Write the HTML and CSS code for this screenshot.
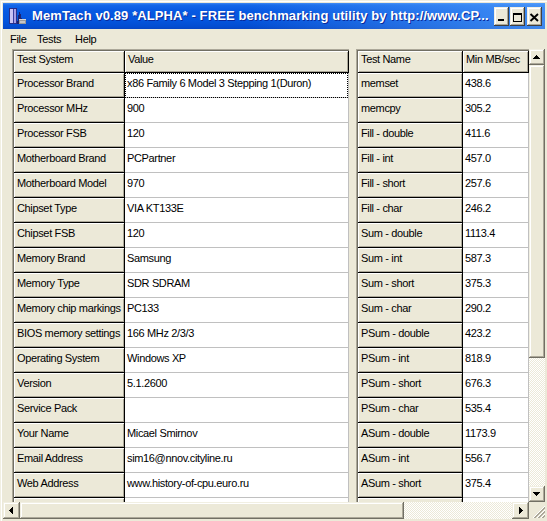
FILE: index.html
```html
<!DOCTYPE html>
<html>
<head>
<meta charset="utf-8">
<title>MemTach</title>
<link rel="stylesheet" href="styles.css">
</head>
<body>
<div class="window">
  <div class="titlebar">
    <svg class="app-icon" width="18" height="17" viewBox="0 0 18 17" shape-rendering="crispEdges">
      <rect x="1" y="0" width="8" height="16" fill="#2a2f8a"/>
      <rect x="2" y="1" width="3" height="14" fill="#c9c3f4"/>
      <rect x="5" y="1" width="1" height="14" fill="#3b3f9e"/>
      <rect x="6" y="1" width="2" height="14" fill="#a59ee6"/>
      <path d="M9 16 L11 4 L12 4 L15 16 Z" fill="#1d2270"/>
      <rect x="11" y="11" width="7" height="5" fill="#9a9a9a"/>
      <rect x="11" y="11" width="7" height="1" fill="#d8d8d8"/>
      <rect x="12" y="13" width="5" height="2" fill="#c6c6c6"/>
    </svg>
    <span class="title">MemTach v0.89 *ALPHA* - FREE benchmarking utility by http://www.CP...</span>
    <div class="caption-buttons">
      <span class="cbtn cbtn-min"><svg width="15" height="19" viewBox="0 0 15 19" shape-rendering="crispEdges"><rect x="4" y="12" width="6" height="2" fill="#000"/></svg></span>
      <span class="cbtn cbtn-max"><svg width="15" height="19" viewBox="0 0 15 19" shape-rendering="crispEdges"><path d="M3 6h9v9H3z M4 8v6h7V8z" fill="#000" fill-rule="evenodd"/></svg></span>
      <span class="cbtn cbtn-close"><svg width="15" height="19" viewBox="0 0 15 19"><path d="M3.5 7l7.5 7M11 7l-7.5 7" stroke="#000" stroke-width="1.9" fill="none"/></svg></span>
    </div>
  </div>

  <div class="menubar">
    <span class="menu-item menu-file">File</span>
    <span class="menu-item menu-tests">Tests</span>
    <span class="menu-item menu-help">Help</span>
  </div>

  <div class="client">
    <div class="grid grid-system">
      <div class="grid-body">
        <div class="cell fixed head">Test System</div><div class="cell fixed head">Value</div>
        <div class="cell fixed">Processor Brand</div><div class="cell focus">x86 Family 6 Model 3 Stepping 1(Duron)</div>
        <div class="cell fixed">Processor MHz</div><div class="cell">900</div>
        <div class="cell fixed">Processor FSB</div><div class="cell">120</div>
        <div class="cell fixed">Motherboard Brand</div><div class="cell">PCPartner</div>
        <div class="cell fixed">Motherboard Model</div><div class="cell">970</div>
        <div class="cell fixed">Chipset Type</div><div class="cell">VIA KT133E</div>
        <div class="cell fixed">Chipset FSB</div><div class="cell">120</div>
        <div class="cell fixed">Memory Brand</div><div class="cell">Samsung</div>
        <div class="cell fixed">Memory Type</div><div class="cell">SDR SDRAM</div>
        <div class="cell fixed">Memory chip markings</div><div class="cell">PC133</div>
        <div class="cell fixed">BIOS memory settings</div><div class="cell">166 MHz 2/3/3</div>
        <div class="cell fixed">Operating System</div><div class="cell">Windows XP</div>
        <div class="cell fixed">Version</div><div class="cell">5.1.2600</div>
        <div class="cell fixed">Service Pack</div><div class="cell"></div>
        <div class="cell fixed">Your Name</div><div class="cell">Micael Smirnov</div>
        <div class="cell fixed">Email Address</div><div class="cell">sim16@nnov.cityline.ru</div>
        <div class="cell fixed">Web Address</div><div class="cell">www.history-of-cpu.euro.ru</div>
        <div class="cell fixed"></div><div class="cell"></div>
      </div>
    </div>

    <div class="results-pane">
      <div class="grid grid-results">
        <div class="grid-body">
          <div class="cell fixed head">Test Name</div><div class="cell fixed head">Min MB/sec</div>
          <div class="cell fixed">memset</div><div class="cell">438.6</div>
          <div class="cell fixed">memcpy</div><div class="cell">305.2</div>
          <div class="cell fixed">Fill - double</div><div class="cell">411.6</div>
          <div class="cell fixed">Fill - int</div><div class="cell">457.0</div>
          <div class="cell fixed">Fill - short</div><div class="cell">257.6</div>
          <div class="cell fixed">Fill - char</div><div class="cell">246.2</div>
          <div class="cell fixed">Sum - double</div><div class="cell">1113.4</div>
          <div class="cell fixed">Sum - int</div><div class="cell">587.3</div>
          <div class="cell fixed">Sum - short</div><div class="cell">375.3</div>
          <div class="cell fixed">Sum - char</div><div class="cell">290.2</div>
          <div class="cell fixed">PSum - double</div><div class="cell">423.2</div>
          <div class="cell fixed">PSum - int</div><div class="cell">818.9</div>
          <div class="cell fixed">PSum - short</div><div class="cell">676.3</div>
          <div class="cell fixed">PSum - char</div><div class="cell">535.4</div>
          <div class="cell fixed">ASum - double</div><div class="cell">1173.9</div>
          <div class="cell fixed">ASum - int</div><div class="cell">556.7</div>
          <div class="cell fixed">ASum - short</div><div class="cell">375.4</div>
          <div class="cell fixed"></div><div class="cell"></div>
        </div>
      </div>
      <div class="vscroll">
        <span class="sb-btn"><svg width="16" height="16" viewBox="0 0 16 16" shape-rendering="crispEdges"><path d="M7 6h1v1h1v1h1v1h1v1H4V9h1V8h1V7h1z" fill="#000"/></svg></span>
        <span class="sb-thumb sb-thumb-v"></span>
        <span class="sb-track"></span>
        <span class="sb-btn"><svg width="16" height="16" viewBox="0 0 16 16" shape-rendering="crispEdges"><path d="M4 6h7v1h-1v1h-1v1h-1v1H7V9H6V8H5V7H4z" fill="#000"/></svg></span>
      </div>
    </div>
  </div>

  <div class="bottom">
    <div class="hscroll">
      <span class="sb-btn sb-btn-h"><svg width="17" height="17" viewBox="0 0 17 17" shape-rendering="crispEdges"><path d="M6 8h1V7h1V6h1V5h1v7H9v-1H8v-1H7V9H6z" fill="#000"/></svg></span>
      <span class="sb-thumb sb-thumb-h"></span>
      <span class="sb-track"></span>
      <span class="sb-btn sb-btn-h"><svg width="17" height="17" viewBox="0 0 17 17" shape-rendering="crispEdges"><path d="M7 5h1v1h1v1h1v1h1v1h-1v1H9v1H8v1H7z" fill="#000"/></svg></span>
    </div>
    <div class="sizegrip">
      <svg width="16" height="17" viewBox="0 0 16 17" shape-rendering="crispEdges">
        <path d="M15 4h1v1h-1z M14 5h1v1h-1z M13 6h1v1h-1z M12 7h1v1h-1z M11 8h1v1h-1z M10 9h1v1h-1z M9 10h1v1h-1z M8 11h1v1h-1z M7 12h1v1h-1z M6 13h1v1h-1z M5 14h1v1h-1z M4 15h1v1h-1z" fill="#fff"/>
        <path d="M15 5h1v2h-1z M14 6h1v2h-1z M13 7h1v2h-1z M12 8h1v2h-1z M11 9h1v2h-1z M10 10h1v2h-1z M9 11h1v2h-1z M8 12h1v2h-1z M7 13h1v2h-1z M6 14h1v2h-1z M5 15h1v1h-1z" fill="#ACA899"/>
        <path d="M15 8h1v1h-1z M14 9h1v1h-1z M13 10h1v1h-1z M12 11h1v1h-1z M11 12h1v1h-1z M10 13h1v1h-1z M9 14h1v1h-1z M8 15h1v1h-1z" fill="#fff"/>
        <path d="M15 9h1v2h-1z M14 10h1v2h-1z M13 11h1v2h-1z M12 12h1v2h-1z M11 13h1v2h-1z M10 14h1v2h-1z M9 15h1v1h-1z" fill="#ACA899"/>
        <path d="M15 12h1v1h-1z M14 13h1v1h-1z M13 14h1v1h-1z M12 15h1v1h-1z" fill="#fff"/>
        <path d="M15 13h1v2h-1z M14 14h1v2h-1z M13 15h1v1h-1z" fill="#ACA899"/>
      </svg>
    </div>
  </div>
</div>
</body>
</html>
```

FILE: styles.css
```css
* { box-sizing: border-box; }

html, body {
  margin: 0;
  padding: 0;
}

body {
  width: 547px;
  height: 521px;
  overflow: hidden;
  background: #ECE9D8;
  font-family: "Liberation Sans", Arial, sans-serif;
  font-size: 11px;
  color: #000;
}

.window {
  width: 547px;
  height: 521px;
  padding: 3px 2px 2px 3px;
  display: flex;
  flex-direction: column;
  box-shadow: inset 1px 1px 0 #F1EFE2, inset 2px 2px 0 #fff;
}

/* ---------- title bar ---------- */
.titlebar {
  flex: none;
  height: 26px;
  display: flex;
  align-items: center;
  color: #fff;
  background:
    linear-gradient(to right, rgba(95, 170, 255, 0) 0%, rgba(95, 170, 255, 0) 45%, rgba(95, 170, 255, 0.65) 100%),
    linear-gradient(to bottom, #3d87f3 0px, #1467e8 2px, #0759e2 8px, #0454dc 18px, #034cd0 24px, #0845c0 26px);
}

.app-icon {
  flex: none;
  margin-left: 5px;
}

.title {
  margin-left: 6px;
  font-family: "Liberation Sans", Arial, sans-serif;
  font-weight: bold;
  font-size: 13px;
  line-height: 26px;
  letter-spacing: 0.1px;
  white-space: nowrap;
  text-shadow: 1px 1px 0 #0a2a9a;
}

.caption-buttons {
  margin-left: auto;
  margin-right: 3px;
  display: flex;
}

.cbtn {
  width: 15px;
  height: 19px;
  display: block;
  background: #ECE9D8;
  box-shadow: inset -1px -1px 0 #404040, inset 1px 1px 0 #F1EFE2, inset -2px -2px 0 #ACA899, inset 2px 2px 0 #fff;
}

.cbtn svg { display: block; }

.cbtn-max { margin-left: 1px; }
.cbtn-close { margin-left: 2px; }

/* ---------- menu ---------- */
.menubar {
  flex: none;
  height: 19px;
  display: flex;
  padding-left: 1px;
  font-family: "Liberation Sans", Arial, sans-serif;
  font-size: 11px;
  line-height: 20px;
  letter-spacing: -0.3px;
}

.menu-item {
  padding-left: 6px;
  white-space: nowrap;
}

.menu-file { width: 27px; }
.menu-tests { width: 38px; }

/* ---------- client area ---------- */
.client {
  flex: none;
  height: 454px;
  padding-top: 1px;
  display: flex;
  align-items: flex-start;
  overflow: hidden;
}

.grid {
  flex: none;
  border-top: 1px solid #ACA899;
  border-left: 1px solid #ACA899;
}

.grid-body {
  display: grid;
  border-top: 1px solid #716F64;
  border-left: 1px solid #716F64;
}

.grid-system {
  margin-left: 9px;
}

.grid-system .grid-body {
  grid-template-columns: 111px 224px;
}

.results-pane {
  margin-left: 7px;
  display: flex;
  align-items: flex-start;
}

.grid-results .grid-body {
  grid-template-columns: 105px 66px;
}

.cell {
  height: 25px;
  padding: 4px 0 0 2px;
  line-height: 13px;
  letter-spacing: -0.35px;
  white-space: nowrap;
  overflow: hidden;
  background: #fff;
  border-right: 1px solid #C0C0C0;
  border-bottom: 1px solid #C0C0C0;
}

.cell.fixed {
  background: #ECE9D8;
  padding-left: 3px;
  border-right-color: #000;
  border-bottom-color: #000;
  box-shadow: inset 1px 1px 0 #fff, inset -1px -1px 0 #ACA899;
}

.cell.head {
  height: 22px;
  padding-top: 2px;
}

.cell.focus {
  position: relative;
  overflow: visible;
}

.cell.focus::after {
  content: "";
  position: absolute;
  left: 0;
  top: 0;
  right: 0;
  bottom: -1px;
  border: 1px dotted #000;
}

/* ---------- scrollbars ---------- */
.vscroll {
  flex: none;
  width: 16px;
  height: 453px;
  display: flex;
  flex-direction: column;
}

.sb-btn,
.sb-thumb {
  flex: none;
  display: block;
  background: #ECE9D8;
  box-shadow: inset -1px -1px 0 #716F64, inset 1px 1px 0 #F1EFE2, inset -2px -2px 0 #ACA899, inset 2px 2px 0 #fff;
}

.sb-btn {
  width: 16px;
  height: 16px;
}

.sb-btn svg { display: block; }

.sb-thumb-v {
  height: 293px;
}

.sb-track {
  flex: 1;
  background: repeating-conic-gradient(#fff 0 25%, #ECE9D8 0 50%) 0 0 / 2px 2px;
}

.bottom {
  flex: none;
  height: 17px;
  display: flex;
}

.hscroll {
  width: 526px;
  height: 17px;
  display: flex;
}

.sb-btn-h {
  width: 17px;
  height: 17px;
}

.sb-thumb-h {
  width: 384px;
  height: 17px;
}

.sizegrip {
  width: 16px;
  height: 17px;
  background: #ECE9D8;
}

.sizegrip svg { display: block; }
```
